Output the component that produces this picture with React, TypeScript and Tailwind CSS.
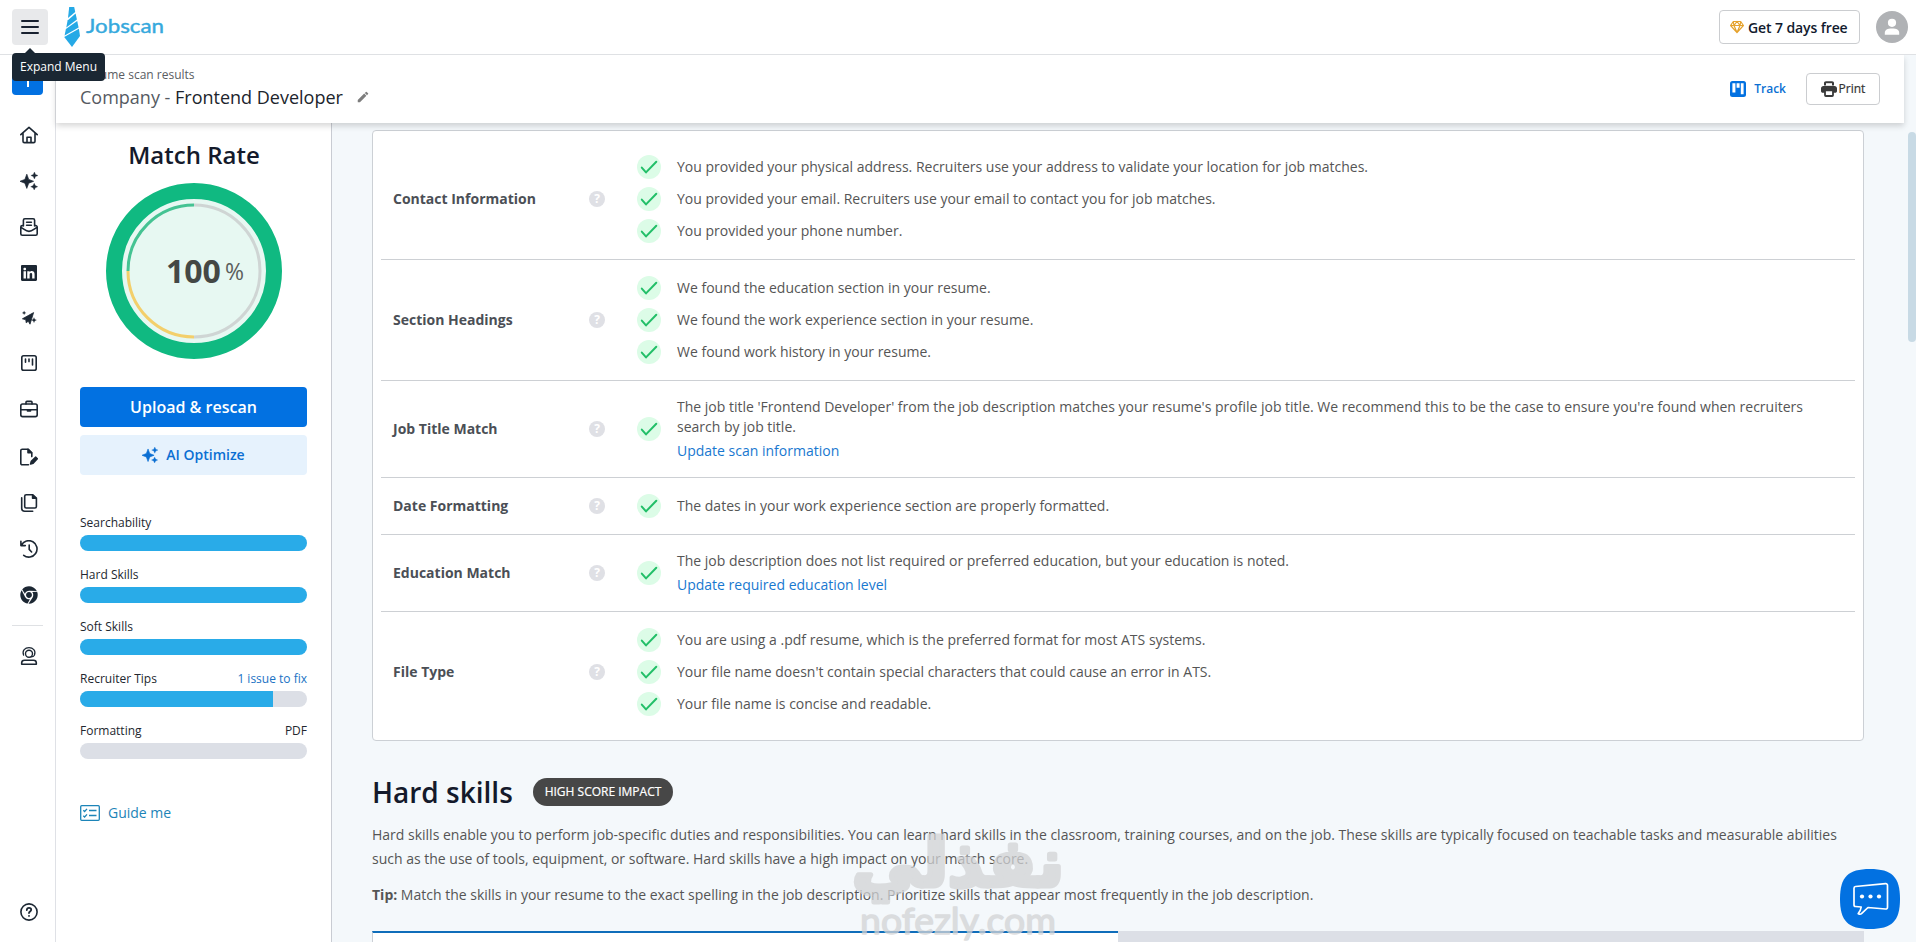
import type { ReactNode } from 'react';
import { clsx } from 'clsx';
import { BsLinkedin } from 'react-icons/bs';
import { FaChrome } from 'react-icons/fa';
import { MdEdit } from 'react-icons/md';

type IconProps = { className?: string };

function Sparkles({ className }: IconProps) {
  return (
    <svg viewBox="0 0 18 18" fill="currentColor" className={className}>
      <path d="M6.8 2.2 8.7 7.4 13.6 9.3 8.7 11.2 6.8 16.4 4.9 11.2 0 9.3 4.9 7.4Z" stroke="currentColor" strokeWidth=".7" strokeLinejoin="round" />
      <path d="M14.4 0 15.5 2.4 18 3.5 15.5 4.6 14.4 7 13.3 4.6 10.9 3.5 13.3 2.4Z" stroke="currentColor" strokeWidth=".3" />
      <path d="M14.2 11.2 15.3 13.6 17.7 14.7 15.3 15.8 14.2 18 13.1 15.8 10.7 14.7 13.1 13.6Z" stroke="currentColor" strokeWidth=".3" />
    </svg>
  );
}

function Outline({ children, className = 'h-[18px] w-[18px]' }: IconProps & { children: ReactNode }) {
  return (
    <svg
      viewBox="0 0 18 18"
      fill="none"
      stroke="currentColor"
      strokeWidth="1.6"
      strokeLinecap="round"
      strokeLinejoin="round"
      className={className}>
      {children}
    </svg>
  );
}

const NAV: { name: string; top: string; icon: ReactNode }[] = [
  {
    name: 'home',
    top: 'mt-[31px]',
    icon: (
      <Outline>
        <path d="M.8 8.6 9 1.4l8.2 7.2M3 7v8.2c0 .8.6 1.4 1.4 1.4h9.2c.8 0 1.4-.6 1.4-1.4V7M7 16.4v-5.2h4v5.2" />
      </Outline>
    ),
  },
  { name: 'optimize', top: 'mt-7', icon: <Sparkles className="h-[18px] w-[18px]" /> },
  {
    name: 'cover-letter',
    top: 'mt-7',
    icon: (
      <Outline>
        <path d="M3.4 8V2.3c0-.8.6-1.5 1.5-1.5h8.2c.9 0 1.5.7 1.5 1.5V8M6.6 4.2h4.8M6.6 7.2h4.8M3.2 7.6H2.3c-.8 0-1.5.6-1.5 1.4v6.8c0 .8.7 1.4 1.5 1.4h13.4c.8 0 1.5-.6 1.5-1.4V9c0-.8-.7-1.4-1.5-1.4h-.9M1 9.4c3 1.5 4.7 4 8 4s5-2.5 8-4" />
      </Outline>
    ),
  },
  { name: 'linkedin', top: 'mt-7', icon: <BsLinkedin className="h-4 w-4" /> },
  {
    name: 'power-edit',
    top: 'mt-[27px]',
    icon: (
      <svg viewBox="0 0 18 18" fill="currentColor" className="h-[18px] w-[18px]">
        <path d="M13.6 3.6 10 15.2 8.3 12.2 6.2 13.8 5.8 10.8 2.4 9.8Z" stroke="currentColor" strokeWidth=".8" strokeLinejoin="round" />
        <path d="M4.1 1.7 4.8 3.2 6.3 3.9 4.8 4.6 4.1 6.1 3.4 4.6 1.9 3.9 3.4 3.2Z" />
        <path d="M14 8.3 14.8 10.3 16.8 11.1 14.8 11.9 14 13.9 13.2 11.9 11.2 11.1 13.2 10.3Z" />
      </svg>
    ),
  },
  {
    name: 'tracker',
    top: 'mt-[27px]',
    icon: (
      <Outline>
        <rect x="1.8" y="1.8" width="14.4" height="14.4" rx="1.8" />
        <path d="M5.5 5v3.2M9 5v2.6M12.5 5v6" />
      </Outline>
    ),
  },
  {
    name: 'jobs',
    top: 'mt-7',
    icon: (
      <Outline>
        <path d="M6 4V2.3c0-.5.4-.9.9-.9h4.2c.5 0 .9.4.9.9V4M.8 9.8h16.4M7.5 9.8v1.2h3V9.8" />
        <rect x=".8" y="4" width="16.4" height="12.6" rx="1.8" />
      </Outline>
    ),
  },
  {
    name: 'builder',
    top: 'mt-[30px]',
    icon: (
      <Outline>
        <path d="M8.5 16.8H2.2c-.8 0-1.4-.6-1.4-1.4V2.6c0-.8.6-1.4 1.4-1.4h6l3.6 3.6v3.8" />
        <path d="M8 1.4v3.4h3.6Z" fill="currentColor" />
        <path d="m10.6 16 .7-2.6 4.5-4.2 1.5 1.5-4.2 4.5Z" fill="currentColor" />
      </Outline>
    ),
  },
  {
    name: 'documents',
    top: 'mt-7',
    icon: (
      <Outline>
        <path d="M6.2.8h6.6L16.4 4v8.5c0 .9-.7 1.5-1.5 1.5H6.2c-.8 0-1.5-.6-1.5-1.5V2.3C4.7 1.4 5.4.8 6.2.8Z" />
        <path d="M12.6 1v3.2h3.2Z" fill="currentColor" />
        <path d="M1.700 3.800v10.400c0 1.700 1.300 3 3 3h8" />
      </Outline>
    ),
  },
  {
    name: 'history',
    top: 'mt-7',
    icon: (
      <Outline>
        <path d="M1.4 5.4A8.2 8.2 0 1 1 3.7 15.3M.9 1.3v4.3h4.4M9.2 5v4.4l2.4 2.6" />
      </Outline>
    ),
  },
  { name: 'extension', top: 'mt-7', icon: <FaChrome className="h-[18px] w-[18px]" /> },
];

function TopBar() {
  return (
    <header className="relative z-20 flex h-[55px] shrink-0 items-center border-b border-[#dfe1e4] bg-white">
      <button type="button" className="relative ml-3 flex h-9 w-9 items-center justify-center rounded-[4px] bg-[#e8e9eb]">
        <svg viewBox="0 0 18 16" className="h-4 w-[18px]" stroke="#18202f" strokeWidth="2" strokeLinecap="round">
          <path d="M1 2h16M1 8h16M1 14h16" />
        </svg>
        <span className="absolute top-11 left-0 flex h-7 w-[93px] items-center justify-center rounded-[4px] bg-[#1a2733] text-[12px] text-white">
          <span className="absolute -top-[5px] left-[12px] h-0 w-0 border-x-[6px] border-b-[6px] border-x-transparent border-b-[#1a2733]" />
          Expand Menu
        </span>
      </button>
      <svg viewBox="0 0 16 40" className="ml-4 h-10 w-4" fill="#25a9e6">
        <path d="M5.2 0h5l1 5L4 11Z" />
        <path d="m11.6 6.500 1.300 6L2.300 20.500l1.300-7Z" />
        <path d="m13.200 14 1.400 6.500L.600 28.500l1.300-6.500Z" />
        <path d="M.200 30 14.900 21.800l1.100 7.200L8 40Z" />
      </svg>
      <svg className="ml-1.5 h-7 w-[84px] overflow-visible" viewBox="0 0 84 28">
        <text x="0" y="20" textLength="78" lengthAdjust="spacingAndGlyphs" fill="#36a9dd" stroke="#36a9dd" strokeWidth=".4" className="font-['Lato'] text-[19px]">
          Jobscan
        </text>
      </svg>
      <button type="button" className="ml-auto flex h-[34px] w-[141px] items-center rounded-[4px] border border-[#cbcdd0] pl-[10px] text-[14px] font-semibold tracking-[-0.1px] whitespace-nowrap text-[#111a2e]">
        <svg viewBox="0 0 14 14" className="mr-[4px] h-[14px] w-[14px] shrink-0" fill="none" stroke="#e5a22c" strokeWidth="1.2" strokeLinejoin="round">
          <path d="M3.300 1.500h7.400l2.700 4L7 12.700.6 5.500ZM.6 5.500h12.800M4 5.500l3 7 3-7M3.300 1.500 4 5.500l3-4 3 4 .7-4" />
        </svg>
        Get 7 days free
      </button>
      <span className="mr-2 ml-4 flex h-8 w-8 items-center justify-center rounded-full bg-[#b0b2b5]">
        <svg viewBox="0 0 16 18" className="h-[18px] w-4" fill="white">
          <circle cx="8" cy="4.8" r="4.1" />
          <path d="M.8 16.700v-1.800c0-2.800 2.500-4.300 7.200-4.300s7.200 1.500 7.200 4.300v1.800Z" />
        </svg>
      </span>
    </header>
  );
}

function NavRail() {
  return (
    <nav className="flex w-14 shrink-0 flex-col items-center border-r border-[#dfe1e6] bg-white text-[#1c2733]">
      <div className="mt-[9px] flex h-[31px] w-[31px] items-center justify-center rounded-[4px] bg-[#0271e1] text-white">
        <svg viewBox="0 0 14 14" className="h-[14px] w-[14px]" stroke="currentColor" strokeWidth="2">
          <path d="M7 0v14M0 7h14" />
        </svg>
      </div>
      {NAV.map((n) => (
        <span key={n.name} className={clsx('ml-[3px] flex h-[18px] w-[18px] items-center justify-center', n.top)}>
          {n.icon}
        </span>
      ))}
      <span className="mt-[21px] h-px w-[31px] bg-[#dfe1e4]" />
      <Outline className="mt-[21px] ml-[3px] h-[18px] w-[18px]">
        <path d="M3.600 8.200C1.700 3.600 5.200.6 9 .6s7.300 3 5.400 7.600c-.5 1-1.600 1.600-3.400 1.700" strokeWidth="1.2" />
        <circle cx="9" cy="6.7" r="3.5" strokeWidth="1.4" />
        <path d="M1.700 17.200v-1.400c0-1.600 1.200-2.600 2.800-2.600h9c1.600 0 2.800 1 2.800 2.600v1.400Z" />
      </Outline>
      <Outline className="mt-auto mb-[21px] ml-[3px] h-[18px] w-[18px]">
        <circle cx="9" cy="9" r="8.1" />
        <path d="M6.800 7c.1-1.400 1-2.100 2.200-2.100 1.300 0 2.200.8 2.200 1.900 0 1.600-2.200 1.700-2.200 3.200M9 12.800v.1" strokeWidth="1.8" />
      </Outline>
    </nav>
  );
}

function TitleBar() {
  return (
    <div className="relative z-10 flex h-[68px] w-[1848px] items-center bg-white pl-6 shadow-[0_3px_6px_rgba(0,0,0,0.16)]">
      <div className="pb-[2px]">
        <div className="mt-px text-[12px] leading-4 text-[#5a5d63]">Resume scan results</div>
        <div className="mt-px flex items-center text-[18px] leading-[26px] text-[#555a62]">
          <span className="whitespace-pre">Company - </span>
          <span className="text-[#20242c]">Frontend Developer</span>
          <MdEdit className="ml-[13px] h-[14px] w-[14px] text-[#7d7d7d]" />
        </div>
      </div>
      <div className="ml-auto flex items-center text-[12px]">
        <svg viewBox="0 0 16 16" className="h-4 w-4">
          <rect width="16" height="16" rx="2.500" fill="#0271e1" />
          <path d="M2.400 2.200h3v9.300h-3ZM6.600 2.200h3v4.600h-3ZM10.800 2.200h2.800v11h-2.800Z" fill="white" />
        </svg>
        <span className="ml-2 font-semibold text-[#0b6fd3]">Track</span>
        <button type="button" className="mr-6 ml-[20px] flex h-8 w-[74px] items-center justify-center gap-[2px] rounded-[4px] border border-[#cbcdd0] text-[#333] [-webkit-text-stroke:0.2px_#333]">
          <svg viewBox="0 0 16 16" className="h-4 w-4">
            <path d="M3 4.500V2.200C3 1 3.800.3 5 .3h6c1.200 0 2 .7 2 1.900v2.300ZM2.500 5h11C15 5 16 6 16 7.400V10c0 1-.7 1.800-1.800 1.800H1.800C.7 11.800 0 11 0 10V7.400C0 6 1 5 2.500 5Z" fill="#3a3a3a" />
            <path d="M5 4.700V2.200h6v2.500Z" fill="white" />
            <rect x="4" y="9.300" width="8" height="5.700" rx=".8" fill="white" stroke="#3a3a3a" strokeWidth="1.800" />
          </svg>
          Print
        </button>
      </div>
    </div>
  );
}

function Gauge() {
  return (
    <div className="relative mt-[12px] ml-px h-44 w-44">
      <svg viewBox="0 0 176 176" className="h-44 w-44" fill="none">
        <circle cx="88" cy="88" r="80" fill="#e7f8f2" stroke="#10b981" strokeWidth="16" />
        <path d="M88 22a66 66 0 0 1 0 132" stroke="#cfd5d4" strokeWidth="3" />
        <path d="M88 154a66 66 0 0 1-66-66" stroke="#f3cf6b" strokeWidth="3" />
        <path d="M22 88a66 66 0 0 1 66-66" stroke="#45c393" strokeWidth="3" />
      </svg>
      <div className="absolute inset-0 flex items-center pl-[60px] text-[#444845]">
        <span className="text-[32px] font-bold">100</span>
        <span className="ml-[4px] text-[23px] text-[#5c605d]">%</span>
      </div>
    </div>
  );
}

const SCORES = [
  { label: 'Searchability', value: 100 },
  { label: 'Hard Skills', value: 100 },
  { label: 'Soft Skills', value: 100 },
  { label: 'Recruiter Tips', value: 85, note: '1 issue to fix', link: true },
  { label: 'Formatting', value: 0, note: 'PDF' },
];

function MatchPanel() {
  return (
    <aside className="flex w-[276px] shrink-0 flex-col items-center border-r border-[#c9ccd3] bg-white">
      <h2 className="mt-[16px] ml-px text-[24px] leading-8 font-semibold text-[#141a2b]">Match Rate</h2>
      <Gauge />
      <div className="w-[227px]">
        <button type="button" className="mt-7 flex h-10 w-full items-center justify-center rounded-[4px] bg-[#0271e1] text-[16px] font-semibold text-white">
          Upload & rescan
        </button>
        <button type="button" className="mt-2 flex h-10 w-full items-center justify-center gap-2 rounded-[4px] bg-[#e6f2fd] pb-px text-[14px] font-semibold text-[#0b6fd3]">
          <Sparkles className="h-4 w-4" />
          AI Optimize
        </button>
        <div className="mt-[39px] space-y-[15px]">
          {SCORES.map((s) => (
            <div key={s.label}>
              <div className="mb-[3px] flex h-[18px] items-center justify-between text-[12px] text-[#23272f]">
                <span>{s.label}</span>
                {s.note && <span className={clsx(s.link && 'text-[#1a72c4]')}>{s.note}</span>}
              </div>
              <div className="h-4 overflow-hidden rounded-full bg-[#dcdfe6]">
                <div className="h-full bg-[#29abe8]" style={{ width: `${s.value}%` }} />
              </div>
            </div>
          ))}
        </div>
        <div className="mt-[43px] flex items-center text-[14px] text-[#1c84b8]">
          <svg viewBox="0 0 20 16" className="mr-2 h-4 w-5" fill="none" stroke="currentColor" strokeWidth="1.3">
            <rect x=".7" y=".7" width="18.6" height="14.6" rx="1" />
            <path d="m3.300 5.300 1.300 1.200 2.400-2.600M3.300 10.800 4.600 12 7 9.400M9 5.500h7.500M9 10.500h7.500" />
          </svg>
          Guide me
        </div>
      </div>
    </aside>
  );
}

type Finding = { text: string; link?: string };

const CHECKS: { title: string; findings: Finding[] }[] = [
  {
    title: 'Contact Information',
    findings: [
      { text: 'You provided your physical address. Recruiters use your address to validate your location for job matches.' },
      { text: 'You provided your email. Recruiters use your email to contact you for job matches.' },
      { text: 'You provided your phone number.' },
    ],
  },
  {
    title: 'Section Headings',
    findings: [
      { text: 'We found the education section in your resume.' },
      { text: 'We found the work experience section in your resume.' },
      { text: 'We found work history in your resume.' },
    ],
  },
  {
    title: 'Job Title Match',
    findings: [
      {
        text: "The job title 'Frontend Developer' from the job description matches your resume's profile job title. We recommend this to be the case to ensure you're found when recruiters search by job title.",
        link: 'Update scan information',
      },
    ],
  },
  {
    title: 'Date Formatting',
    findings: [{ text: 'The dates in your work experience section are properly formatted.' }],
  },
  {
    title: 'Education Match',
    findings: [
      {
        text: 'The job description does not list required or preferred education, but your education is noted.',
        link: 'Update required education level',
      },
    ],
  },
  {
    title: 'File Type',
    findings: [
      { text: 'You are using a .pdf resume, which is the preferred format for most ATS systems.' },
      { text: "Your file name doesn't contain special characters that could cause an error in ATS." },
      { text: 'Your file name is concise and readable.' },
    ],
  },
];

function CheckMark() {
  return (
    <svg viewBox="0 0 24 24" className="h-6 w-6 shrink-0" fill="none">
      <circle cx="12" cy="12" r="12" fill="#dcfce7" />
      <path d="m4.800 12.600 4.200 4.800L19.300 6.700" stroke="#22bf68" strokeWidth="2" strokeLinecap="round" strokeLinejoin="round" />
    </svg>
  );
}

function SearchabilityCard() {
  return (
    <section className="mt-[7px] divide-y divide-[#cdd0d4] rounded-[4px] border border-[#ccd0d5] bg-white p-2 text-[14px] leading-5">
      {CHECKS.map((c) => (
        <div key={c.title} className="flex items-center py-4 pl-3">
          <h3 className="w-[196px] shrink-0 font-bold text-[#4b4f56]">{c.title}</h3>
          <span className="mr-8 flex h-4 w-4 shrink-0 items-center justify-center rounded-full bg-[#dfe0e5] text-[12px] leading-none font-bold text-white">
            ?
          </span>
          <div className="flex-1 space-y-2">
            {c.findings.map((f) => (
              <div key={f.text} className="flex items-center gap-4">
                <CheckMark />
                <div className="max-w-[1150px] text-[#555]">
                  {f.text}
                  {f.link && <div className="mt-1 text-[#1878d0]">{f.link}</div>}
                </div>
              </div>
            ))}
          </div>
        </div>
      ))}
    </section>
  );
}

function HardSkills() {
  return (
    <section className="flex flex-1 flex-col text-[14px] text-[#555]">
      <div className="mt-[33px] flex items-center">
        <h2 className="w-[141px] text-[28px] leading-9 font-semibold whitespace-nowrap text-[#141a2b]">Hard skills</h2>
        <span className="ml-5 flex h-7 w-[140px] items-center justify-center rounded-full bg-[#474747] pb-px text-[12px] text-white [-webkit-text-stroke:0.2px_white]">
          HIGH SCORE IMPACT
        </span>
      </div>
      <p className="mt-[13px] leading-6">
        Hard skills enable you to perform job-specific duties and responsibilities. You can learn hard skills in the classroom, training courses, and on the job. These skills are typically focused on teachable tasks and measurable abilities such as the use of tools, equipment, or software. Hard skills have a high impact on your match score.
      </p>
      <p className="mt-3 leading-6">
        <b>Tip:</b> Match the skills in your resume to the exact spelling in the job description. Prioritize skills that appear most frequently in the job description.
      </p>
      <div className="mt-6 flex flex-1">
        <div className="w-1/2 border-t-2 border-l border-t-[#0f6dba] border-l-[#ccd0d5] bg-white" />
        <div className="w-1/2 bg-[#dcdfe6]" />
      </div>
    </section>
  );
}

function Watermark() {
  return (
    <svg viewBox="0 0 220 120" className="pointer-events-none absolute top-[822px] left-[848px] z-20 h-[120px] w-[220px] overflow-visible opacity-75" fill="#d2d3d5" stroke="#d2d3d5" strokeLinejoin="round">
      <text x="110" y="64" textAnchor="middle" textLength="212" lengthAdjust="spacingAndGlyphs" strokeWidth="5" direction="rtl" className="font-['DejaVu_Sans'] text-[66px] font-bold">
        نفذلي
      </text>
      <text x="12" y="112" textLength="196" lengthAdjust="spacingAndGlyphs" strokeWidth="1.4" className="font-['Lato'] text-[37px]">
        nofezly.com
      </text>
    </svg>
  );
}

export default function App() {
  return (
    <div className="relative flex h-[942px] w-[1916px] flex-col overflow-hidden bg-[#f4f8fb] font-['Open_Sans',sans-serif]">
      <TopBar />
      <div className="flex min-h-0 flex-1">
        <NavRail />
        <div className="flex min-w-0 flex-1 flex-col">
          <TitleBar />
          <div className="flex min-h-0 flex-1">
            <MatchPanel />
            <main className="ml-10 flex w-[1492px] flex-col">
              <SearchabilityCard />
              <HardSkills />
            </main>
            <div className="mt-[9px] ml-auto h-[210px] w-2 rounded-full bg-[#c8dae5]" />
          </div>
        </div>
      </div>
      <Watermark />
      <div className="absolute top-[869px] left-[1840px] z-30 h-[60px] w-[60px]">
        <svg viewBox="0 0 60 60" className="h-full w-full" fill="none">
          <path d="M30 0C52 0 60 8 60 30S52 60 30 60 0 52 0 30 8 0 30 0Z" fill="#0271e1" />
          <path d="M15.500 17.500 45.500 14.700c1.200-.1 2 .5 2 1.700v21.800c0 1.200-.8 1.900-2 1.800l-17.500-1.500-6.500 6.200c-1 .8-3.800.3-3.300-.2 1.700-1.800 2.700-4.300 3-6.500l-5.700-.5c-1 0-1.500-.8-1.500-1.800V19.200c0-1 .5-1.600 1.500-1.700Z" stroke="white" strokeWidth="1.700" strokeLinejoin="round" />
          <g fill="white">
            <circle cx="22" cy="27.500" r="2.100" />
            <circle cx="30.500" cy="27.500" r="2.100" />
            <circle cx="39" cy="27.500" r="2.100" />
          </g>
        </svg>
      </div>
    </div>
  );
}
